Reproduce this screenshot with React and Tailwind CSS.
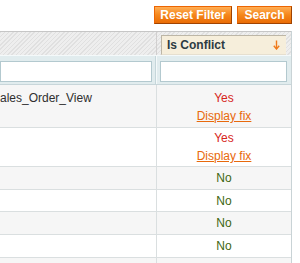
import React from "react";

const rows = [
  { name: "Sales_Order_View", conflict: true, h: "h-[43px]", pt: "pt-[4px]", even: true },
  { name: "", conflict: true, h: "h-[39px]", pt: "pt-[1px]", even: false },
  { name: "", conflict: false, h: "h-[23px]", even: true },
  { name: "", conflict: false, h: "h-[22px]", even: false },
  { name: "", conflict: false, h: "h-[23px]", even: true },
  { name: "", conflict: false, h: "h-[23px]", even: false },
  { name: "", conflict: null, h: "h-[23px]", even: true },
];

function SortArrow() {
  return (
    <svg width="7" height="10" viewBox="0 0 7 10" className="shrink-0">
      <path d="M3.5 0.5 V8.5" stroke="#f07a1a" strokeWidth="1.4" />
      <path d="M0.8 5.8 L3.5 9 L6.2 5.8" stroke="#f07a1a" strokeWidth="1.4" fill="none" />
    </svg>
  );
}

export default function App() {
  return (
    <div className="w-[300px] h-[263px] overflow-hidden bg-white font-['Liberation_Sans',Arial,sans-serif] text-[12px] text-[#2f2f2f]">
      <div className="flex justify-end gap-[5px] pt-[6px] pr-[8px] h-[31px]">
        <button className="w-[78px] h-[18px] border border-[#ed6502] border-r-[#a04300] border-b-[#a04300] bg-[linear-gradient(#ffae55,#f5861a_50%,#ea6c05)] text-white font-bold text-[12px] leading-[16px] text-center">
          Reset Filter
        </button>
        <button className="w-[55px] h-[18px] border border-[#ed6502] border-r-[#a04300] border-b-[#a04300] bg-[linear-gradient(#ffae55,#f5861a_50%,#ea6c05)] text-white font-bold text-[12px] leading-[16px] text-center">
          Search
        </button>
      </div>

      <div className="w-[292px] border-r border-[#c9d3d6]">
        {/* headings */}
        <div className="flex h-[24px] border-t border-[#c6c6c6] bg-[repeating-linear-gradient(135deg,#e0e0e0_0px,#e0e0e0_1px,#eeeeee_1px,#eeeeee_3px)]">
          <div className="w-[157px] border-r border-[#d1cfcf]" />
          <div className="flex-1 pt-[3px] pl-[4px] pr-[5px]">
            <div className="h-[20px] flex items-center justify-between pl-[5px] pr-[6px] bg-[#f6eedb] border-l border-t border-[#bdb6a6] border-b border-b-[#e6dfcf]">
              <span className="font-bold text-[#2d3b42]">Is Conflict</span>
              <SortArrow />
            </div>
          </div>
        </div>

        {/* filter */}
        <div className="flex h-[30px] bg-[#e1ecee] border-t border-t-[#f4f9fa] border-b border-b-[#c8d6da]">
          <div className="w-[156px] border-r border-[#c5d6da] pt-[5px] pr-[3px]">
            <div className="h-[21px] bg-white border border-[#b3c9cf]" />
          </div>
          <div className="flex-1 border-l border-[#f4f9fa] pt-[5px] pl-[3px] pr-[4px]">
            <div className="h-[21px] bg-white border border-[#b3c9cf]" />
          </div>
        </div>

        {rows.map((r, i) => (
          <div
            key={i}
            className={`flex border-b border-[#dadfe0] ${r.h} ${r.even ? "bg-[#f6f6f6]" : "bg-white"}`}
          >
            <div className={`w-[157px] border-r border-[#dadfe0] overflow-hidden leading-[18px] ${r.conflict ? r.pt : "flex items-center"}`}>
              {r.name && <span className="block ml-[-8px] whitespace-nowrap">{r.name}</span>}
            </div>
            {r.conflict === true && (
              <div className={`flex-1 text-center leading-[18px] ${r.pt}`}>
                <div className="text-[#d7251b]">Yes</div>
                <a href="#" className="text-[#e8690c] underline">Display fix</a>
              </div>
            )}
            {r.conflict === false && (
              <div className="flex-1 flex items-center justify-center text-[#3d6611]">No</div>
            )}
            {r.conflict === null && <div className="flex-1" />}
          </div>
        ))}
      </div>
    </div>
  );
}
